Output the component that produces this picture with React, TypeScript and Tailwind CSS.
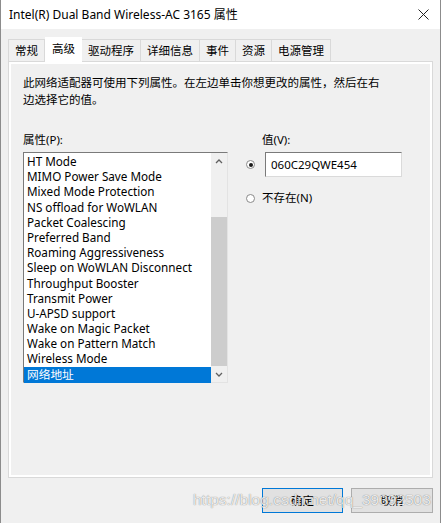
const items = [
  "HT Mode",
  "MIMO Power Save Mode",
  "Mixed Mode Protection",
  "NS offload for WoWLAN",
  "Packet Coalescing",
  "Preferred Band",
  "Roaming Aggressiveness",
  "Sleep on WoWLAN Disconnect",
  "Throughput Booster",
  "Transmit Power",
  "U-APSD support",
  "Wake on Magic Packet",
  "Wake on Pattern Match",
  "Wireless Mode",
  "网络地址",
]

const tabs = ["常规", "高级", "驱动程序", "详细信息", "事件", "资源", "电源管理"]

function Radio({ checked }: { checked?: boolean }) {
  return (
    <span className="flex h-[9px] w-[9px] items-center justify-center rounded-full border border-[#8a8a8a] bg-white">
      {checked && <span className="h-[4px] w-[4px] rounded-full bg-[#1a1a1a]" />}
    </span>
  )
}

function Chevron({ down }: { down?: boolean }) {
  return (
    <svg width="8" height="5" viewBox="0 0 8 5" className={down ? "rotate-180" : ""}>
      <path d="M1 4 L4 1 L7 4" fill="none" stroke="#606060" strokeWidth="1.3" />
    </svg>
  )
}

export default function App() {
  return (
    <div className="relative h-[523px] w-[444px] overflow-hidden bg-white font-['Noto_Sans','Noto_Sans_CJK_SC',sans-serif] text-[11.5px] text-black">
      <div className="flex h-full w-[441px] flex-col border-x border-[#8c8c8c] bg-[#f0f0f0]">
        {/* Title bar */}
        <div className="flex h-[29px] shrink-0 items-center justify-between bg-white pl-[8px] pr-[11px]">
          <span className="text-[12px]">Intel(R) Dual Band Wireless-AC 3165 属性</span>
          <svg width="11" height="11" viewBox="0 0 11 11">
            <path d="M0.5 0.5 L10.5 10.5 M10.5 0.5 L0.5 10.5" stroke="#222" strokeWidth="1" />
          </svg>
        </div>

        {/* Tabs */}
        <div className="mt-[8px] flex h-[24px] items-end pl-[7px]">
          {tabs.map((t, i) =>
            i === 1 ? (
              <div key={t} className="relative z-10 -mb-px flex h-[25px] items-start bg-white px-[7px] pt-[3px]">
                {t}
              </div>
            ) : (
              <div
                key={t}
                className="-ml-px flex h-[22px] items-center border border-b-0 border-[#d9d9d9] px-[6px] pt-[1px] first:ml-0"
              >
                {t}
              </div>
            ),
          )}
        </div>

        {/* Panel */}
        <div className="ml-[7px] h-[417px] w-[425px] border border-[#d9d9d9] bg-white p-[2px]">
          <div className="h-full bg-[#f0f0f0] px-[12px] pt-[10px]">
            <p className="w-[360px] leading-[17px]">
              此网络适配器可使用下列属性。在左边单击你想更改的属性，然后在右边选择它的值。
            </p>

            <div className="mt-[23px] flex">
              <div className="w-[205px]">
                <div className="leading-[17px]">属性(P):</div>
                <div className="mt-[4px] flex h-[231px] border-l-[1.5px] border-t-[1.5px] border-r border-b border-l-[#7a7a7a] border-t-[#7a7a7a] border-r-[#e3e3e3] border-b-[#e3e3e3] bg-white">
                  <div className="flex-1 pt-[1px] text-[11.7px]">
                    {items.map((it, i) => (
                      <div
                        key={it}
                        className={
                          "h-[15.2px] truncate pl-[3px] leading-[15.2px] " +
                          (i === items.length - 1 ? "h-[16px] bg-[#0078d7] text-white" : "")
                        }
                      >
                        {it}
                      </div>
                    ))}
                  </div>
                  <div className="flex w-[16px] flex-col items-center bg-[#f0f0f0]">
                    <div className="flex h-[16px] items-center">
                      <Chevron />
                    </div>
                    <div className="mt-[48px] h-[149px] w-full bg-[#cdcdcd]" />
                    <div className="flex h-[16px] items-center">
                      <Chevron down />
                    </div>
                  </div>
                </div>
              </div>

              <div className="ml-[18px] flex flex-col">
                <div className="pl-[16px] leading-[17px]">值(V):</div>
                <div className="mt-[4px] flex items-center">
                  <Radio checked />
                  <div className="ml-[10px] flex h-[25px] w-[137px] items-center border-l-[1.5px] border-t-[1.5px] border-r border-b border-l-[#7a7a7a] border-t-[#7a7a7a] border-r-[#dadada] border-b-[#dadada] bg-white pl-[5px]">
                    060C29QWE454
                  </div>
                </div>
                <div className="mt-[13px] flex h-[16px] items-center">
                  <Radio />
                  <span className="ml-[7px]">不存在(N)</span>
                </div>
              </div>
            </div>
          </div>
        </div>

        {/* Buttons */}
        <div className="mt-[10px] flex justify-end gap-[8px] pr-[7px]">
          <button className="h-[25px] w-[81px] border border-[#0078d7] bg-[#e1e1e1]">确定</button>
          <button className="h-[25px] w-[82px] border border-[#adadad] bg-[#e1e1e1]">取消</button>
        </div>
      </div>

      {/* Watermark */}
      <div className="pointer-events-none absolute left-[193px] top-[490px] font-['Liberation_Sans',sans-serif] text-[15.5px] leading-[20px] text-white/85 [text-shadow:0_0_1px_rgba(0,0,0,0.6)]">
        https://blog.csdn.net/qq_39392503
      </div>
    </div>
  )
}
